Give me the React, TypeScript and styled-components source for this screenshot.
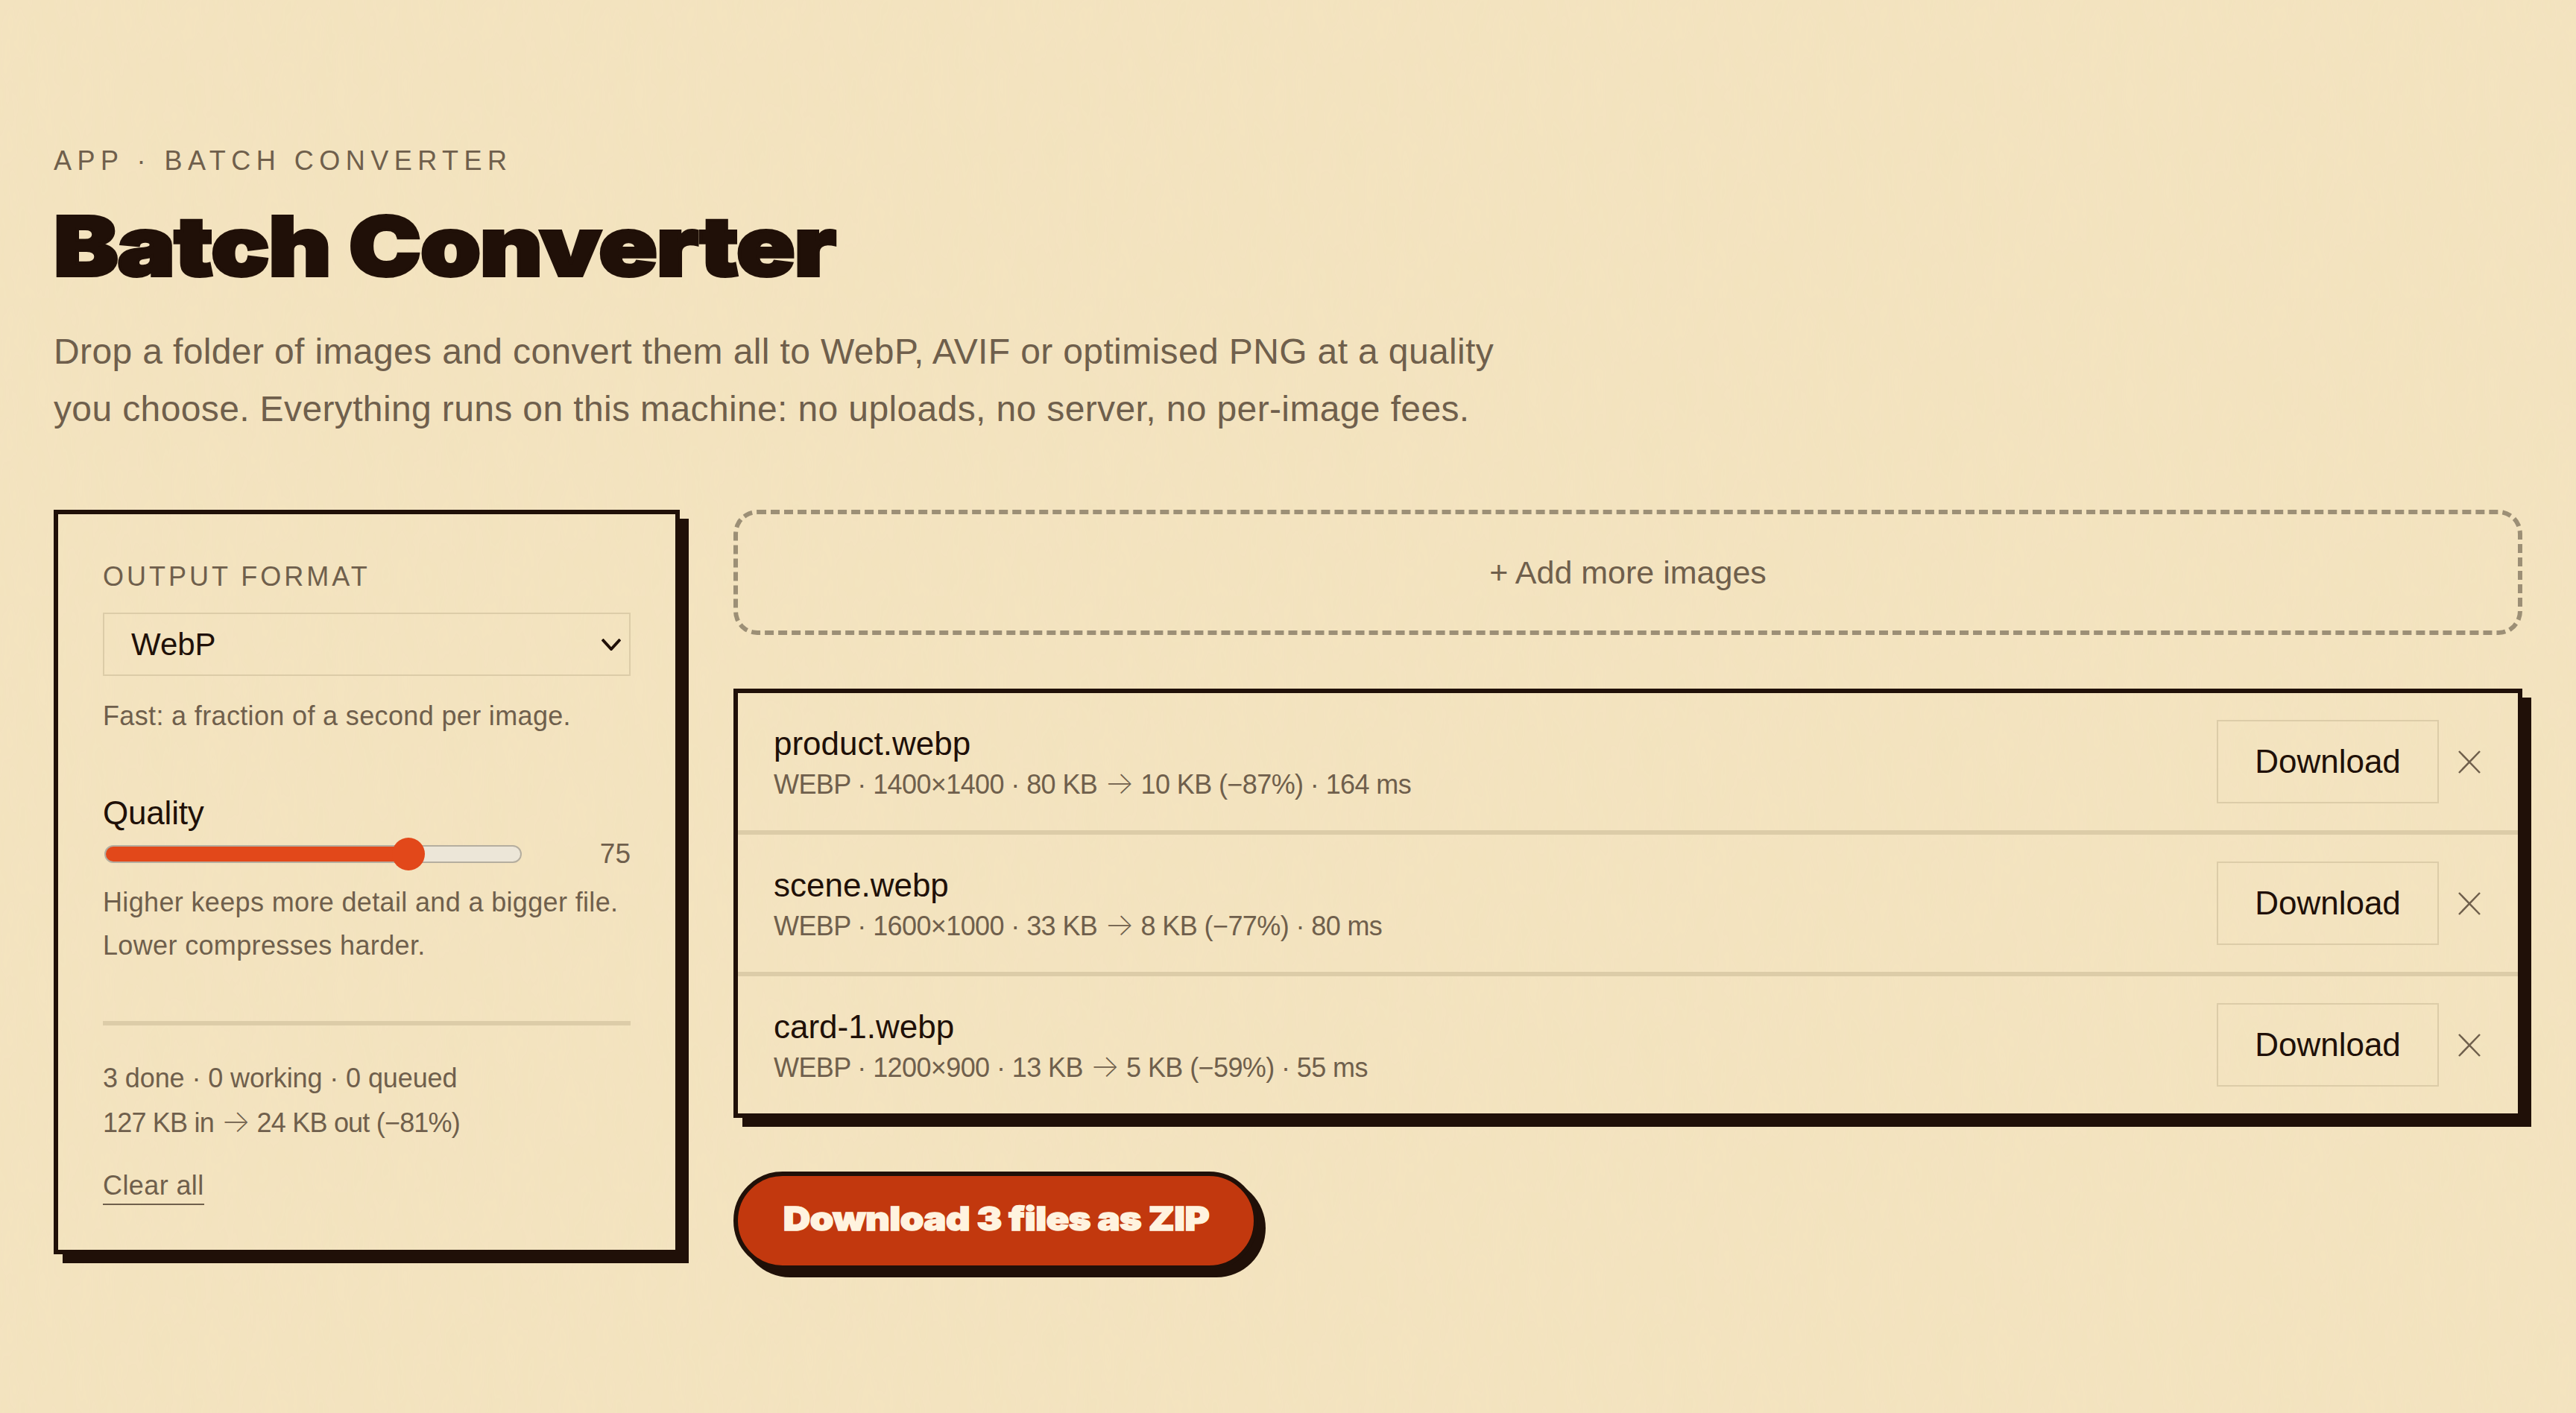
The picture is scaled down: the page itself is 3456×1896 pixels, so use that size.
import React from 'react';
import styled, { createGlobalStyle } from 'styled-components';

const bodyFont = `"Liberation Sans", Arial, sans-serif`;
const displayFont = `Inter, "Liberation Sans", sans-serif`;
const ink = '#201008';
const muted = '#6f5f4c';
const rule = '#dccca8';
const paper = '#f4e4c0';

// faint paper grain, same as the page background in the design
const grain = encodeURIComponent(
  `<svg xmlns="http://www.w3.org/2000/svg" width="400" height="400"><filter id="n"><feTurbulence type="fractalNoise" baseFrequency="0.04 0.012" numOctaves="3"/><feColorMatrix values="0 0 0 0 0.55 0 0 0 0 0.42 0 0 0 0 0.2 0 0 0 0.03 0"/></filter><rect width="400" height="400" filter="url(#n)"/></svg>`,
);

const GlobalStyle = createGlobalStyle`
  html, body {
    margin: 0;
    background: ${paper};
  }
  body {
    font-family: ${bodyFont};
    color: ${ink};
  }
  * { box-sizing: border-box; }
`;

const Page = styled.main`
  min-height: 1896px;
  padding: 192px 72px 0;
  background: ${paper} url("data:image/svg+xml,${grain}");
`;

const Eyebrow = styled.div`
  font-size: 36px;
  line-height: 48px;
  letter-spacing: 7.5px;
  text-transform: uppercase;
  color: ${muted};
`;

const Title = styled.h1`
  width: max-content;
  margin: 30px 0 0;
  font-family: ${displayFont};
  font-weight: 900;
  font-size: 110px;
  line-height: 120px;
  letter-spacing: -1px;
  color: ${ink};
  -webkit-text-stroke: 4px ${ink};
  transform: scaleX(1.18);
  transform-origin: left center;
`;

const Lede = styled.p`
  margin: 43px 0 0;
  font-size: 48px;
  line-height: 77px;
  letter-spacing: 0.37px;
  color: ${muted};
`;

const Columns = styled.div`
  display: grid;
  grid-template-columns: 840px 2400px;
  column-gap: 72px;
  align-items: start;
  margin-top: 97px;
`;

const Card = styled.aside`
  border: 6px solid ${ink};
  box-shadow: 12px 12px 0 ${ink};
  padding: 60px;
  display: flex;
  flex-direction: column;
`;

const FieldLabel = styled.label`
  font-size: 36px;
  line-height: 48px;
  letter-spacing: 4px;
  text-transform: uppercase;
  color: ${muted};
`;

const FormatSelect = styled.div`
  margin-top: 24px;
  height: 85px;
  border: 2px solid ${rule};
  padding: 0 11px 0 36px;
  display: flex;
  align-items: center;
  justify-content: space-between;
  font-size: 42px;
  color: ${ink};
`;

const Hint = styled.p<{ $gap: number }>`
  margin: ${(p) => p.$gap}px 0 0;
  font-size: 36px;
  line-height: 58px;
  letter-spacing: 0.35px;
  color: ${muted};
`;

const QualityLabel = styled.div`
  margin-top: 75px;
  font-size: 44px;
  line-height: 52px;
  letter-spacing: -0.2px;
  color: ${ink};
`;

const SliderRow = styled.div`
  margin-top: 7px;
  display: flex;
  align-items: center;
  justify-content: space-between;
  height: 44px;
`;

const Range = styled.input.attrs({ type: 'range', min: 0, max: 100, defaultValue: 75 })`
  -webkit-appearance: none;
  appearance: none;
  width: 560px;
  height: 44px;
  margin: 0 0 0 2px;
  background: transparent;
  &::-webkit-slider-runnable-track {
    height: 24px;
    border-radius: 12px;
    border: 2px solid #b5ae9f;
    background: linear-gradient(to right, #e2481a 0 73%, #ece6d8 73% 100%);
  }
  &::-webkit-slider-thumb {
    -webkit-appearance: none;
    width: 44px;
    height: 44px;
    margin-top: -12px;
    border-radius: 50%;
    background: #e2481a;
  }
`;

const RangeValue = styled.output`
  font-size: 37px;
  color: ${muted};
`;

const Divider = styled.hr`
  margin: 72px 0 0;
  border: 0;
  height: 6px;
  background: ${rule};
`;

const Stats = styled.div`
  margin-top: 41px;
  font-size: 36px;
  line-height: 60px;
  color: ${muted};
`;

const StatLine = styled.div<{ $spacing: number }>`
  letter-spacing: ${(p) => p.$spacing}px;
`;

const Arrow = styled.span`
  font-family: Inter, sans-serif;
  font-size: 42px;
  font-weight: 200;
  line-height: 0;
`;

const ClearButton = styled.button`
  align-self: flex-start;
  margin-top: 32px;
  padding: 0 0 2px;
  border: 0;
  border-bottom: 2px solid ${muted};
  background: none;
  font: inherit;
  font-size: 36px;
  line-height: 44px;
  letter-spacing: 0.4px;
  color: ${muted};
`;

const MainColumn = styled.section`
  display: flex;
  flex-direction: column;
  align-items: flex-start;
  gap: 72px;
`;

const DropZone = styled.button`
  width: 100%;
  height: 168px;
  border: 6px dashed #9c8f76;
  border-radius: 32px;
  background: none;
  font: inherit;
  font-size: 43px;
  color: ${muted};
`;

const FileList = styled.ul`
  width: 100%;
  margin: 0;
  padding: 0;
  list-style: none;
  border: 6px solid ${ink};
  box-shadow: 12px 12px 0 ${ink};
`;

const FileRow = styled.li`
  display: flex;
  align-items: center;
  height: 190px;
  padding: 0 50px 0 48px;
  border-bottom: 6px solid ${rule};
  &:last-child {
    height: 184px;
    border-bottom: 0;
  }
`;

const FileInfo = styled.div`
  flex: 1;
  min-width: 0;
  padding-top: 6px;
`;

const FileName = styled.div`
  font-size: 44px;
  line-height: 52px;
  color: ${ink};
`;

const FileMeta = styled.div`
  margin-top: 3px;
  font-size: 36px;
  line-height: 52px;
  letter-spacing: -0.6px;
  color: ${muted};
`;

const DownloadButton = styled.button`
  width: 298px;
  height: 112px;
  border: 2px solid ${rule};
  background: none;
  font: inherit;
  font-size: 44px;
  color: ${ink};
`;

const RemoveButton = styled.button`
  display: flex;
  margin-left: 26px;
  padding: 0;
  border: 0;
  background: none;
  color: ${muted};
`;

const ZipButton = styled.button`
  width: 704px;
  height: 132px;
  padding: 0 0 6px;
  border: 6px solid ${ink};
  border-radius: 66px;
  box-shadow: 10px 10px 0 ${ink};
  background: #c2380e;
  font-family: ${displayFont};
  font-weight: 900;
  font-size: 44px;
  letter-spacing: -0.5px;
  color: #fff3df;
  -webkit-text-stroke: 1.5px #fff3df;
`;

const ZipLabel = styled.span`
  display: inline-block;
  transform: scaleX(1.15);
`;

const files = [
  { name: 'product.webp', from: 'WEBP · 1400×1400 · 80 KB', to: '10 KB (−87%) · 164 ms' },
  { name: 'scene.webp', from: 'WEBP · 1600×1000 · 33 KB', to: '8 KB (−77%) · 80 ms' },
  { name: 'card-1.webp', from: 'WEBP · 1200×900 · 13 KB', to: '5 KB (−59%) · 55 ms' },
];

const Chevron = () => (
  <svg width="26" height="16" viewBox="0 0 26 16" fill="none" stroke={ink} strokeWidth="4">
    <path d="M1 1l12 13L25 1" />
  </svg>
);

const Cross = () => (
  <svg width="30" height="31" viewBox="0 0 30 31" fill="none" stroke="currentColor" strokeWidth="2.5">
    <path d="M1 1l28 29M29 1L1 30" />
  </svg>
);

export default function App() {
  return (
    <Page>
      <GlobalStyle />
      <Eyebrow>App · Batch Converter</Eyebrow>
      <Title>Batch Converter</Title>
      <Lede>
        Drop a folder of images and convert them all to WebP, AVIF or optimised PNG at a quality
        <br />
        you choose. Everything runs on this machine: no uploads, no server, no per-image fees.
      </Lede>
      <Columns>
        <Card>
          <FieldLabel>Output format</FieldLabel>
          <FormatSelect>
            WebP
            <Chevron />
          </FormatSelect>
          <Hint $gap={25}>Fast: a fraction of a second per image.</Hint>
          <QualityLabel>Quality</QualityLabel>
          <SliderRow>
            <Range />
            <RangeValue>75</RangeValue>
          </SliderRow>
          <Hint $gap={14}>
            Higher keeps more detail and a bigger file.
            <br />
            Lower compresses harder.
          </Hint>
          <Divider />
          <Stats>
            <StatLine $spacing={-0.1}>3 done · 0 working · 0 queued</StatLine>
            <StatLine $spacing={-0.8}>
              127 KB in <Arrow>→</Arrow> 24 KB out (−81%)
            </StatLine>
          </Stats>
          <ClearButton>Clear all</ClearButton>
        </Card>
        <MainColumn>
          <DropZone>+ Add more images</DropZone>
          <FileList>
            {files.map((file) => (
              <FileRow key={file.name}>
                <FileInfo>
                  <FileName>{file.name}</FileName>
                  <FileMeta>
                    {file.from} <Arrow>→</Arrow> {file.to}
                  </FileMeta>
                </FileInfo>
                <DownloadButton>Download</DownloadButton>
                <RemoveButton aria-label={`Remove ${file.name}`}>
                  <Cross />
                </RemoveButton>
              </FileRow>
            ))}
          </FileList>
          <ZipButton>
            <ZipLabel>Download 3 files as ZIP</ZipLabel>
          </ZipButton>
        </MainColumn>
      </Columns>
    </Page>
  );
}
